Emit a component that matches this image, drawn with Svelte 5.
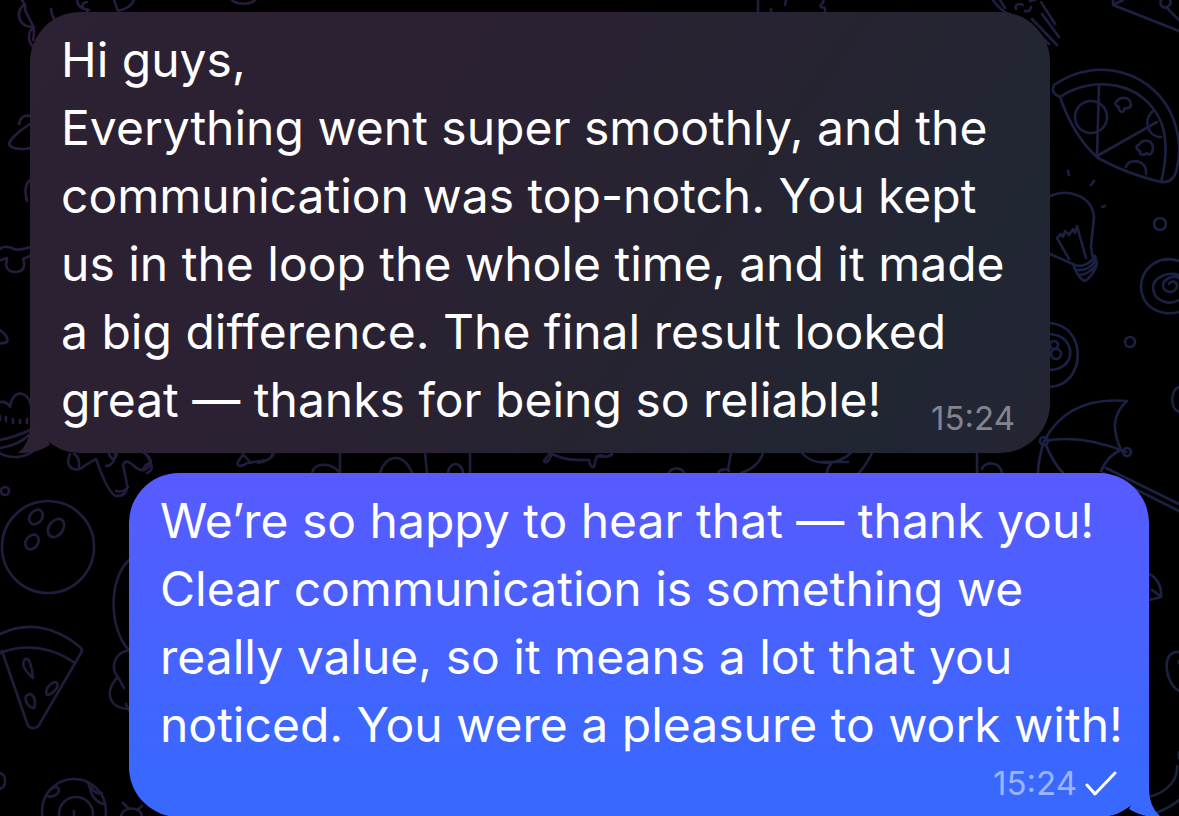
<script lang="ts">
	type Message = {
		id: number;
		own: boolean;
		lines: string[];
		time: string;
	};

	const messages: Message[] = [
		{
			id: 1,
			own: false,
			lines: [
				'Hi guys,',
				'Everything went super smoothly, and the',
				'communication was top-notch. You kept',
				'us in the loop the whole time, and it made',
				'a big difference. The final result looked',
				'great — thanks for being so reliable!'
			],
			time: '15:24'
		},
		{
			id: 2,
			own: true,
			lines: [
				'We’re so happy to hear that — thank you!',
				'Clear communication is something we',
				'really value, so it means a lot that you',
				'noticed. You were a pleasure to work with!'
			],
			time: '15:24'
		}
	];
</script>

<main class="chat">
	<svg class="wallpaper" viewBox="0 0 1179 816" preserveAspectRatio="xMidYMin slice" aria-hidden="true">
		<defs>
			<linearGradient id="doodle" gradientUnits="userSpaceOnUse" x1="100" y1="0" x2="1000" y2="600">
				<stop offset="0" stop-color="#2a1b40" />
				<stop offset="0.4" stop-color="#221b3a" />
				<stop offset="1" stop-color="#1a2244" />
			</linearGradient>
		</defs>
		<g fill="none" stroke="url(#doodle)" stroke-width="2.6" stroke-linecap="round" stroke-linejoin="round">
			<!-- top edge -->
			<path d="M22 0q4 5 3 10l8 16q2 5 0 14M25 4c-9 5-9 22 7 23M34 27c-7 5-6 14-1 20M51 9q1 8 4 11M77 0c1 7 5 9 12 10M83 7q-2-4 4-5M87 9v3M114 0q2 6 4 11c9-2 14-6 16-11M232 0c5 5 18 5 23 0" />
			<path d="M758 0v13M771 9v3M786 0l-1 5M823 0c2 4-4 4-2 7l4 1v5M993 0c5 8 15 16 25 18M1000 0l5 8M1016 9c-2-5 4-6 7-4M1025 11q5 1 6-4M1030 1l5-1M1041 2l14 22M1042 14l17 23M1032 19l25 26M1027 23l22 21" />
			<path d="M1113 0v5l66 26M1113 5l10-5M1161 0c-2 5 2 9 6 7s4-5 3-7M1167 8l12 12" />
			<!-- left edge -->
			<path d="M30 116q-9-2-11 8M30 124c-13 8-20 16-21 20 2 5 12 6 21 4M30 180q-7 6-3 21" />
			<path d="M0 249c2-3 9-3 14 0 5 2 10 0 16-2M0 260c6 0 7-5 7 0-3 8 2 12 8 12 8 0 11-5 8-13l7-3M0 330c4 3 9 8 7 12q-4 2-7 1" />
			<path d="M0 402q7-1 10 5c2-18 18-17 21-2M0 416v4M6 417v4M13 419v4M20 420v3M27 419v4M0 440q15-3 30-10M0 448q19-3 29-13M0 453c9 6 24 5 32-1" />
			<path d="M70 454c-7 16 9 19 14 12l12-7c6 17 15 39 22 37 8 0 10-8 9-12l-4-19c3-8 9 0 15 4 8 4 16-5 11-12l-8-7M109 454c5 11 8 1 8-2M115 453c1 9-5 13-9 13M116 491q8 2 12-4M74 454q6 3 5 13M143 470q2-6 7-7" />
			<circle cx="5" cy="491" r="4" />
			<circle cx="48" cy="547" r="46" />
			<ellipse cx="36" cy="517" rx="6" ry="8" transform="rotate(38 36 517)" />
			<ellipse cx="56" cy="528" rx="7" ry="10" transform="rotate(36 56 528)" />
			<ellipse cx="32" cy="542" rx="6" ry="8" transform="rotate(35 32 542)" />
			<path d="M0 634c27-13 55-8 80 13q3 3 1 6l-42 72q-4 6-11 1L2 651M0 653c29-11 53-5 75 10M33 678c-1-7-1-14-5-19-5-1-6 6-3 10 2 4 5 6 8 9zM47 695c-3-6 4-13 9-13 5 4-3 12-9 13zM34 708c2-6 1-12-4-14-6 1-5 6-3 9 2 4 4 5 7 5z" />
			<path d="M129 560c-22 21-19 71 0 90M129 650c-15 3-19 18-11 27l6 11M118 677c-13 13-11 31 11 32M126 704l4 8M0 773q6 2 5 9 0 5-5 7" />
			<circle cx="74" cy="811" r="32" />
			<circle cx="76" cy="814" r="17" />
			<path d="M74 811v6M50 790c8-7 11 0 7 4q-5 4-9 2M88 783c4 7 8 12 14 10M89 784q2 16 14 20M121 816c2-10 19-10 21 0M123 803l6 6M142 806l-5 4" />
			<!-- strip between the bubbles -->
			<path d="M145 453c8 11 9 17 2 20M244 453l-6 9c-2 6 6 4 9 1l20-3c5-2 7-7 7-7M242 453l9 10M258 463c8-1 14-5 15-10M312 473c2-11 20-11 28 0M340 453v20M380 473c7-20 24-20 32 0M425 453l2 20M448 473c1-12 14-12 15 0M470 453v20" />
			<path d="M550 453l-6 8q1 3 5-1l3-6c14 7 25 6 37 6 1 8 6 10 6 2l2-6c8 2 14 0 15-3M600 455q8 3 12 0M669 473c2-6 13-6 15 0M731 453l-3 17M718 473c2-4 9-5 11-2M763 453c-4 12-12 17-22 20M802 453c12 14 36 12 49 0M821 462l27 0M832 463q-5 5-5 10M872 453c-4 9-8 14-13 20M977 453v20M982 469c2-8 18-8 20 4" />
			<!-- pizza -->
			<path d="M1054 85c45-31 101-12 119 33q10 27 4 49-2 16-16 15M1054 85q-4 8 6 12M1060 97c35-23 84-15 101 25 7 17 5 42 0 60M1060 97c9 26 21 46 38 61q29 16 63 24M1099 86l-2 70 60-34" />
			<circle cx="1091" cy="117" r="16" />
			<path d="M1153 111c-11 9-5 26 8 26M1126 167c3-10 22-7 20 7M1117 101c5-6 14-3 14 4-1 6-7 1-7 5-1 4-6 1-5-3-5-2-4-5-2-6zM1139 145c4-7 13-5 14 2 0 7-4 9-6 6-3 3-8 2-7-2-5-2-4-6-1-6z" />
			<!-- light bulb -->
			<path d="M1050 196c19-8 42 0 44 21l-3 29q1 14 6 18M1069 259l-12-21 4-4 2 3 2-6 4 4 4-6 2 4 2-7 9 32M1050 254l23 10M1073 264c8 5 18-1 22-8l2 8q-4 12-12 17-6-1-12-17zM1077 270q12 1 18-9M1078 275q10 0 17-9M1068 171l1 4M1094 181l-3 4M1105 206l-3 1" />
			<circle cx="1160" cy="224" r="6" />
			<circle cx="1130" cy="342" r="5" />
			<!-- lollipop -->
			<path d="M1179 261c-21-7-38 8-38 26 1 23 23 29 38 25M1164 260q10-2 15 1M1179 275c-12-4-26 3-26 13 1 15 18 17 26 12M1179 278c-7-4-16 2-16 8 1 8 13 8 14 0 0-5-6-6-8-2" />
			<path d="M1179 387c-9 3-9 22 0 25M1050 323c38 3 36 62 0 64M1050 334c27 2 27 35 0 36" />
			<circle cx="1054" cy="345" r="4" />
			<circle cx="1056" cy="354" r="5" />
			<!-- umbrella -->
			<path d="M1044 441c18-34 50-43 83-40-16 14-14 31-6 49q-13 5-20 21M1044 441c31-6 60 2 82 11M1044 441c-4 13-6 22-6 32M1046 445q6 16 17 28M1106 468l73 36M1103 473l76 38" />
			<circle cx="1044" cy="441" r="4" />
			<circle cx="1127" cy="452" r="4" />
			<!-- right edge -->
			<path d="M1149 574c9 4 13 14 12 23l-12 3M1152 590l7 5M1179 652c-18-2-15 30 0 39M1179 661v2M1149 797c19-5 29-18 28-31M1156 813c10-4 17-8 23-13M1179 752v6" />
		</g>
	</svg>

	{#each messages as message (message.id)}
		<article class="bubble" class:own={message.own}>
			<svg class="tail" viewBox="0 0 40 50" aria-hidden="true">
				<path d="M12 0v22q0 18-12 28 18 1 32-8L22 22 14 0z" />
			</svg>
			<p class="text">
				{#each message.lines as line}
					<span class="line">{line}</span>
				{/each}
			</p>
			<div class="meta">
				<time>{message.time}</time>
				{#if message.own}
					<svg class="check" viewBox="0 0 32 26" role="img" aria-label="Sent">
						<path d="M2 15l8 9L30 3" />
					</svg>
				{/if}
			</div>
		</article>
	{/each}
</main>

<style>
	:global(body) {
		margin: 0;
		background: #000;
	}

	.chat {
		position: relative;
		display: flex;
		flex-direction: column;
		gap: 20px;
		box-sizing: border-box;
		height: 100vh;
		padding: 12px 30px 0;
		overflow: hidden;
		background: #000;
		font-family: Inter, 'Liberation Sans', sans-serif;
	}

	.wallpaper {
		position: absolute;
		inset: 0;
		width: 100%;
		height: 100%;
	}

	.bubble {
		--tail: #2d2134;
		position: relative;
		display: grid;
		grid-template-columns: minmax(0, 1fr);
		flex: none;
		box-sizing: border-box;
		width: calc(100% - 99px);
		padding: 14px 31px 19px;
		border-radius: 50px;
		background: linear-gradient(125deg, #2d2134 0%, #2b2133 35%, #272331 60%, #212633 85%, #242533 100%);
		color: #fff;
	}

	.bubble.own {
		--tail: #3968ff;
		align-self: flex-end;
		padding-bottom: 14px;
		background: linear-gradient(#585bff, #3968ff 88%);
	}

	.text {
		grid-area: 1 / 1;
		margin: 0;
		font-size: 48px;
		line-height: 68px;
	}

	.line {
		display: block;
		white-space: nowrap;
	}

	.meta {
		grid-area: 1 / 1;
		display: flex;
		align-items: center;
		align-self: end;
		justify-self: end;
		gap: 8px;
		margin-right: 4px;
		color: #85838d;
		font-size: 33px;
		line-height: 32px;
	}

	.own .meta {
		grid-area: 2 / 1;
		margin: 8px 0 4px;
		padding-right: 1px;
		color: #9cb4ff;
	}

	.check {
		width: 32px;
		height: 26px;
		fill: none;
		stroke: #fff;
		stroke-width: 3;
		stroke-linecap: round;
		stroke-linejoin: round;
	}

	.tail {
		position: absolute;
		bottom: 0;
		left: -12px;
		width: 40px;
		height: 50px;
		fill: var(--tail);
	}

	.own .tail {
		right: -12px;
		left: auto;
		transform: scaleX(-1);
	}
</style>
